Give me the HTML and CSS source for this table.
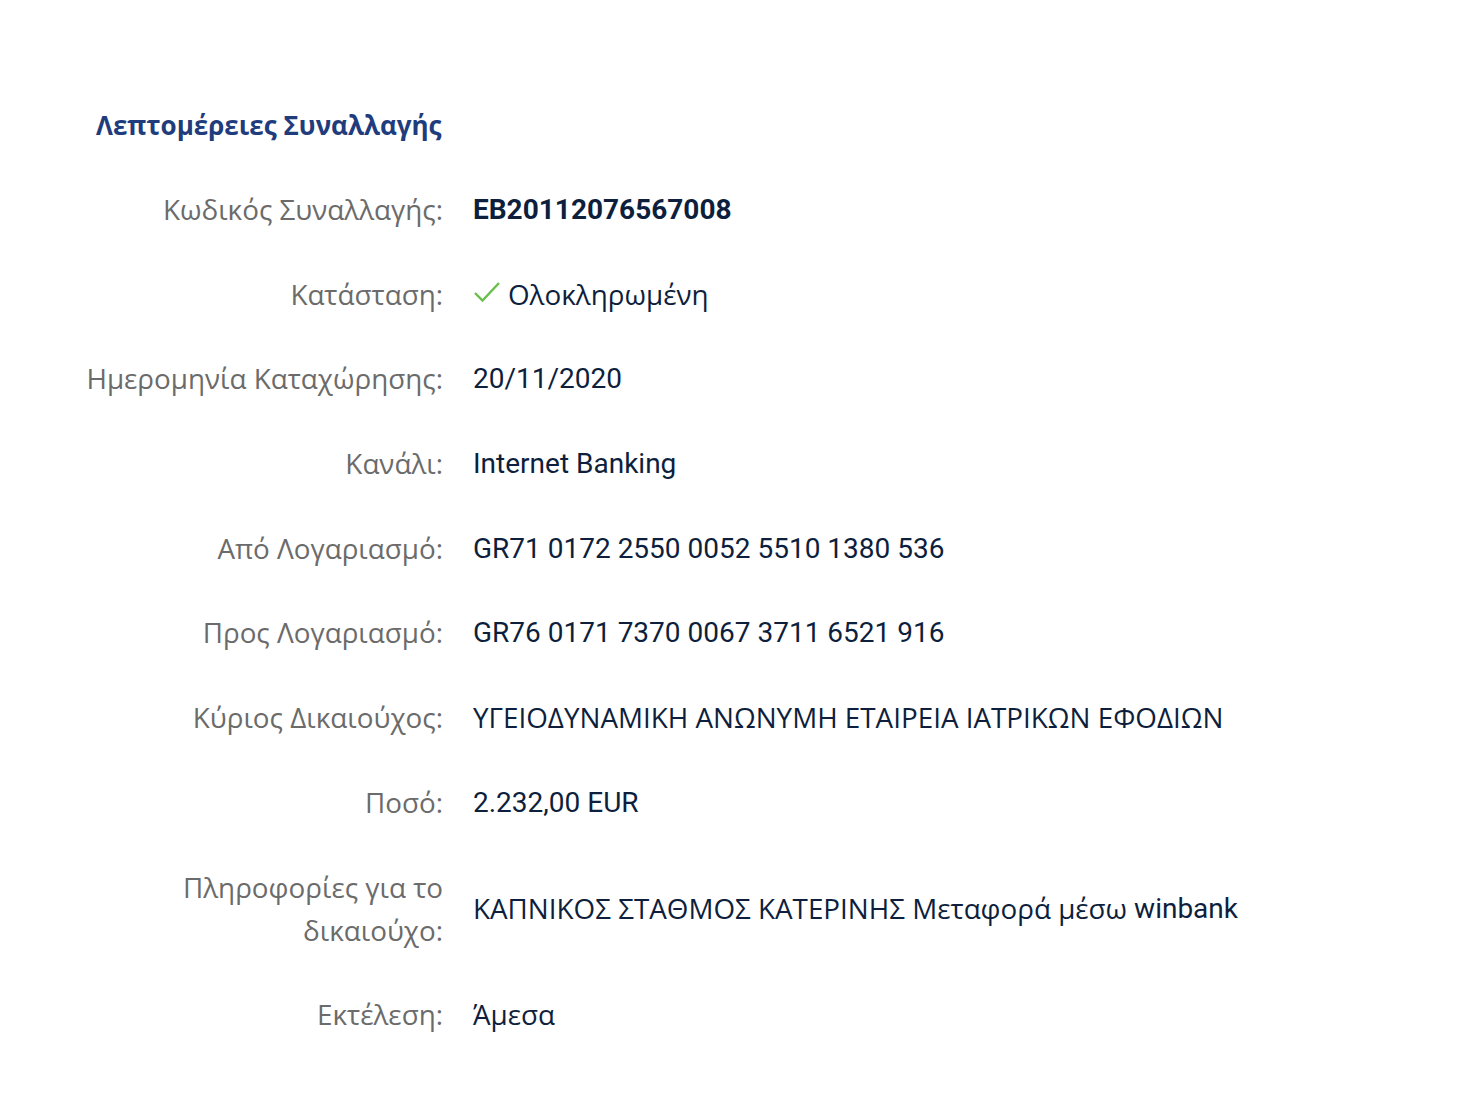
FILE: index.html
```html
<!DOCTYPE html>
<html lang="el">
<head>
<meta charset="utf-8">
<title>Λεπτομέρειες Συναλλαγής</title>
<link rel="stylesheet" href="styles.css">
</head>
<body>
<main class="panel">
  <h1 class="title">Λεπτομέρειες Συναλλαγής</h1>
  <dl class="details">
    <div class="row"><dt class="label">Κωδικός Συναλλαγής:</dt><dd class="value strong">EB20112076567008</dd></div>
    <div class="row"><dt class="label">Κατάσταση:</dt><dd class="value"><svg class="check" width="28" height="24" viewBox="0 0 28 24"><path d="M2 13 L9.5 20.5 L26 3" fill="none" stroke="#6abf4b" stroke-width="2.4"/></svg><span class="gr">Ολοκληρωμένη</span></dd></div>
    <div class="row"><dt class="label">Ημερομηνία Καταχώρησης:</dt><dd class="value">20/11/2020</dd></div>
    <div class="row"><dt class="label">Κανάλι:</dt><dd class="value">Internet Banking</dd></div>
    <div class="row"><dt class="label">Από Λογαριασμό:</dt><dd class="value">GR71 0172 2550 0052 5510 1380 536</dd></div>
    <div class="row"><dt class="label">Προς Λογαριασμό:</dt><dd class="value">GR76 0171 7370 0067 3711 6521 916</dd></div>
    <div class="row"><dt class="label">Κύριος Δικαιούχος:</dt><dd class="value"><span class="gr">ΥΓΕΙΟΔΥΝΑΜΙΚΗ ΑΝΩΝΥΜΗ ΕΤΑΙΡΕΙΑ ΙΑΤΡΙΚΩΝ ΕΦΟΔΙΩΝ</span></dd></div>
    <div class="row"><dt class="label">Ποσό:</dt><dd class="value">2.232,00 EUR</dd></div>
    <div class="row"><dt class="label">Πληροφορίες για το δικαιούχο:</dt><dd class="value"><span class="gr">ΚΑΠΝΙΚΟΣ ΣΤΑΘΜΟΣ ΚΑΤΕΡΙΝΗΣ Μεταφορά μέσω</span> winbank</dd></div>
    <div class="row"><dt class="label">Εκτέλεση:</dt><dd class="value"><span class="gr">Άμεσα</span></dd></div>
  </dl>
</main>
</body>
</html>
```
FILE: styles.css
```css
html, body {
  margin: 0;
  padding: 0;
  background: #ffffff;
}
body {
  font-family: Roboto, "Open Sans", sans-serif;
}
.panel {
  padding: 103px 0 0 73px;
}
.title {
  margin: 0;
  padding-left: 23px;
  font-family: "Open Sans", sans-serif;
  font-weight: 700;
  font-size: 26px;
  line-height: 44px;
  color: #1f3c7c;
}
.details {
  margin: 41px 0 0 0;
  display: flex;
  flex-direction: column;
  gap: 41.7px;
}
.row {
  display: flex;
  align-items: center;
  gap: 30px;
}
.label {
  width: 370px;
  flex: none;
  text-align: right;
  font-family: "Open Sans", sans-serif;
  font-size: 27.8px;
  line-height: 43px;
  color: #6b6b6b;
}
.value {
  margin: 0;
  font-size: 28px;
  line-height: 43px;
  color: #0e1f3d;
  display: flex;
  align-items: center;
  white-space: pre;
}
.value.strong {
  font-weight: 700;
}
.gr {
  font-family: "Open Sans", sans-serif;
  font-size: 27.8px;
}
.check {
  margin-right: 7px;
  margin-top: -4px;
}
```
